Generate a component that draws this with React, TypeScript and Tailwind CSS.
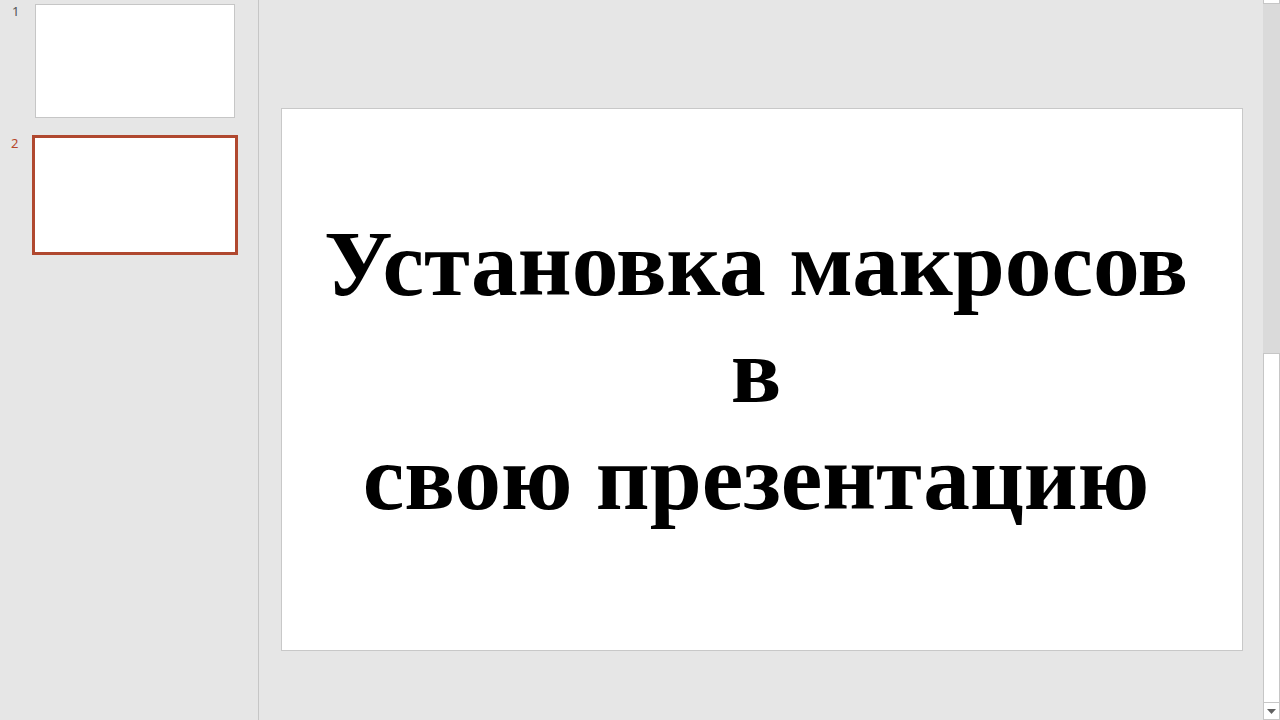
export default function App() {
  return (
    <div className="flex h-[720px] w-[1280px] overflow-hidden bg-[#e6e6e6] font-['Noto_Sans',sans-serif]">
      {/* thumbnails pane */}
      <div className="w-[259px] shrink-0 border-r border-[#c6c6c6]">
        <div className="flex pt-[4px]">
          <span className="w-[35px] pl-[12px] text-[13px] leading-[14px] text-[#555]">1</span>
          <div className="h-[114px] w-[200px] border border-[#c6c6c6] bg-white" />
        </div>
        <div className="mt-[17px] flex">
          <span className="w-[32px] pl-[11px] pt-[1px] text-[13px] leading-[14px] text-[#b7472a]">2</span>
          <div className="h-[120px] w-[206px] border-[3px] border-[#b0482f] bg-white" />
        </div>
      </div>

      {/* slide editing area */}
      <div className="flex-1 pl-[22px] pt-[108px]">
        <div className="flex h-[543px] w-[962px] flex-col items-center justify-center border border-[#c8c8c8] bg-white pb-[19px] pr-[12px]">
          <div className="text-center font-['Liberation_Serif','Times_New_Roman',serif] text-[93.5px] font-bold leading-[107px] text-black">
            <div>Установка макросов</div>
            <div>в</div>
            <div>свою презентацию</div>
          </div>
        </div>
      </div>

      {/* vertical scrollbar */}
      <div className="flex w-[17px] shrink-0 flex-col bg-[#dadada]">
        <div className="h-[4px] border-x border-b border-[#c6c6c6] bg-white" />
        <div className="h-[349px]" />
        <div className="flex-1 border border-[#c6c6c6] bg-white" />
        <div className="flex h-[17px] items-center justify-center border-x border-b border-[#c6c6c6] bg-white">
          <svg width="9" height="5" viewBox="0 0 9 5">
            <path d="M0 0h9L4.5 5z" fill="#606060" />
          </svg>
        </div>
      </div>
    </div>
  );
}
